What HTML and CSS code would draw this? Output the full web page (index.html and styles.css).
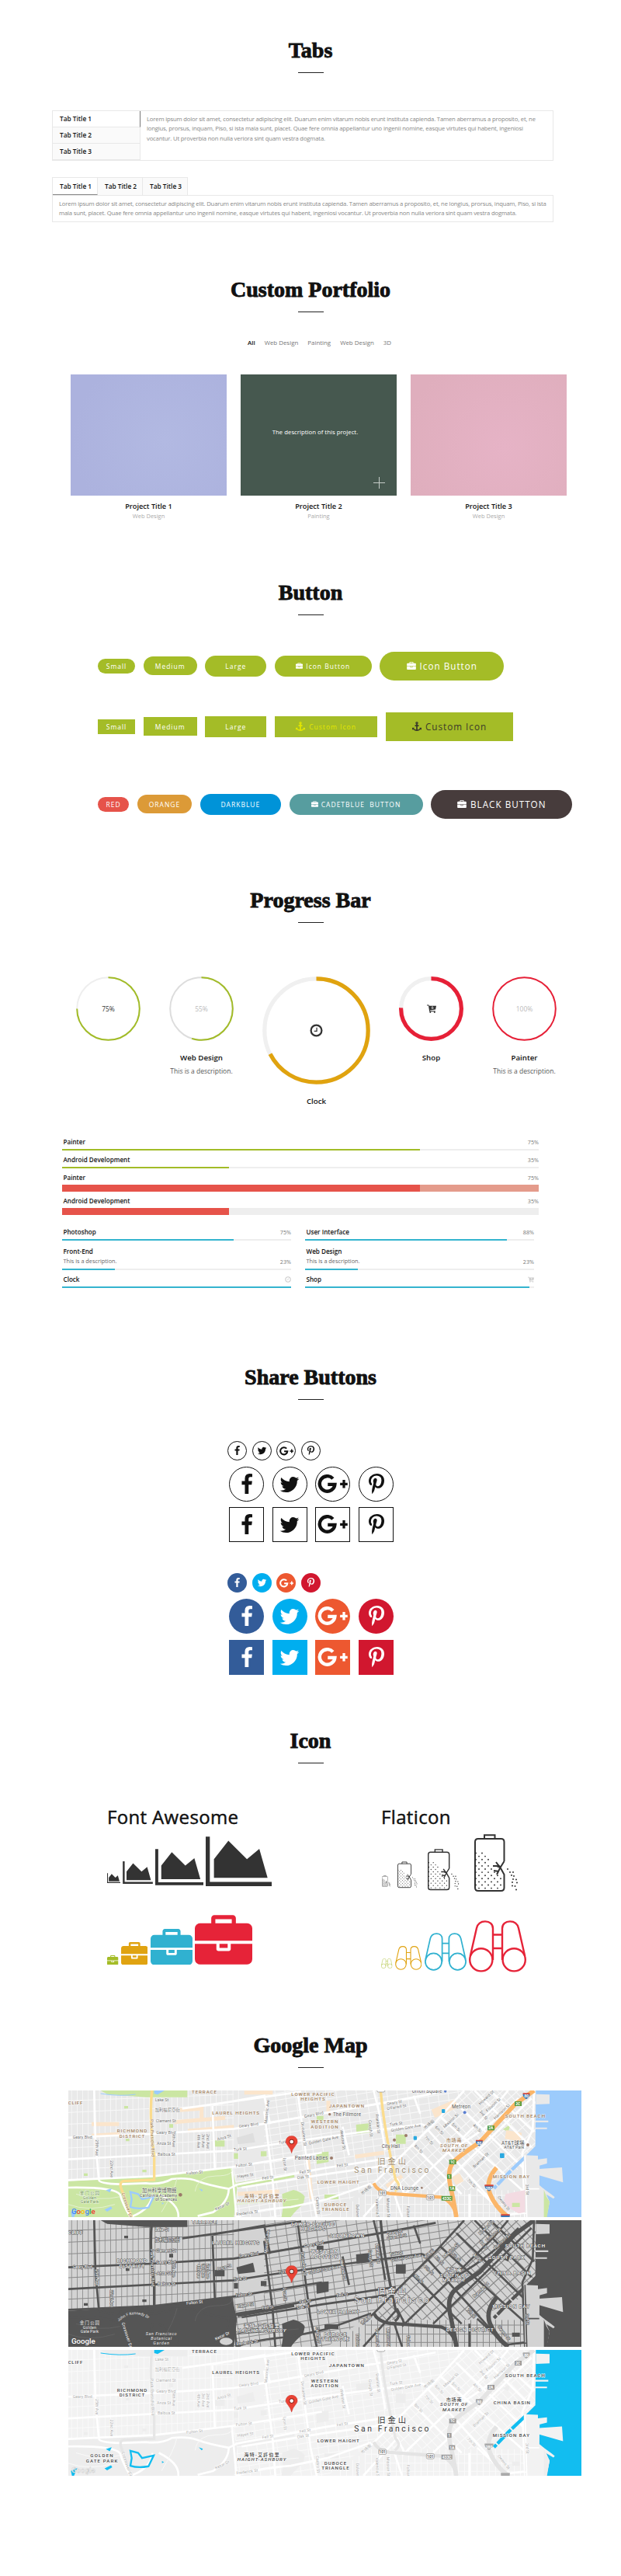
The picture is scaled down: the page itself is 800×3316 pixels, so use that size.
FILE: index.html
```html
<!DOCTYPE html>
<html lang="en">
<head>
<meta charset="utf-8">
<title>Elements</title>
<link rel="stylesheet" href="styles.css">
</head>
<body>
<svg class="defs" aria-hidden="true">
  <symbol id="facebook" viewBox="0 0 1792 1792"><path d="M1343 12v264h-157q-86 0-116 36t-30 108v189h293l-39 296h-254v759h-306v-759h-255v-296h255v-218q0-186 104-288.5t277-102.5q147 0 228 12z"/></symbol>
  <symbol id="twitter" viewBox="0 0 1792 1792"><path d="M1684 408q-67 98-162 167 1 14 1 42 0 130-38 259.5t-115.5 248.5-184.5 210.5-258 146-323 54.5q-271 0-496-145 35 4 78 4 225 0 401-138-105-2-188-64.5t-114-159.5q33 5 61 5 43 0 85-11-112-23-185.5-111.5t-73.5-205.5v-4q68 38 146 41-66-44-105-115t-39-154q0-88 44-163 121 149 294.5 238.5t371.5 99.5q-8-38-8-74 0-134 94.5-228.5t228.5-94.5q140 0 236 102 109-21 205-78-37 115-142 178 93-10 186-50z"/></symbol>
  <symbol id="gplus" viewBox="0 0 40 26"><path fill="none" stroke="currentColor" stroke-width="4.6" d="M20.4 5.6A10.2 10.2 0 1 0 23 13.4H13.5"/><path d="M30 11.2h3.4V7.4h3.4v3.8h3.2v3.4h-3.2v3.6h-3.4v-3.6H30z"/></symbol>
  <symbol id="pinterest" viewBox="0 0 1792 1792"><path d="M256 597q0-108 37.5-203.5t103.5-166.5 152-123 185-78 202-26q158 0 294 66.5t221 193.5 85 287q0 96-19 188t-60 177-100 149.5-145 103-189 38.5q-68 0-135-32t-96-88q-10 39-28 112.5t-23.5 95-20.5 71-26 71-32 62.5-46 77.5-62 86.5l-14 5-9-10q-15-157-15-188 0-92 21.5-206.5t66.5-287.5 52-203q-32-65-32-169 0-83 52-156t132-73q61 0 95 40.5t34 102.5q0 66-44 191t-44 187q0 63 45 104.5t109 41.5q55 0 102-25t78.5-68 56-95 38-110.5 20-111 6.5-99.5q0-173-109.5-269.5t-285.5-96.5q-200 0-334 129.5t-134 328.5q0 44 12.5 85t27 65 27 45.5 12.5 30.5q0 28-15 73t-37 45q-2 0-17-3-51-15-90.5-56t-61-94.5-32.5-108-11-106.5z"/></symbol>
  <symbol id="briefcase" viewBox="0 0 1792 1536"><path d="M640 256h512v-128h-512v128zm1152 640v480q0 66-47 113t-113 47h-1472q-66 0-113-47t-47-113v-480h672v160q0 26 19 45t45 19h320q26 0 45-19t19-45v-160h672zm-768 0v128h-256v-128h256zm768-480v384h-1792v-384q0-66 47-113t113-47h352v-160q0-40 28-68t68-28h576q40 0 68 28t28 68v160h352q66 0 113 47t47 113z"/></symbol>
  <symbol id="area" viewBox="0 128 2048 1536"><path d="M2048 1536v128h-2048v-1536h128v1408h1920zm-384-1024l256 896h-1664v-576l448-576 576 576z"/></symbol>
  <symbol id="anchor" viewBox="0 0 1792 1792"><path d="M960 256q0-26-19-45t-45-19-45 19-19 45 19 45 45 19 45-19 19-45zm832 928v352q0 22-20 30-8 2-12 2-12 0-23-9l-93-93q-119 143-318.5 226.5t-429.5 83.5-429.5-83.5-318.5-226.5l-93 93q-9 9-23 9-4 0-12-2-20-8-20-30v-352q0-14 9-23t23-9h352q22 0 30 20 8 19-7 35l-100 100q67 91 189.5 153.5t271.5 82.5v-647h-192q-26 0-45-19t-19-45v-128q0-26 19-45t45-19h192v-163q-58-34-93-92.5t-35-128.5q0-106 75-181t181-75 181 75 75 181q0 70-35 128.5t-93 92.5v163h192q26 0 45 19t19 45v128q0 26-19 45t-45 19h-192v647q149-20 271.5-82.5t189.5-153.5l-100-100q-15-16-7-35 8-20 30-20h352q14 0 23 9t9 23z"/></symbol>
  <symbol id="clock" viewBox="0 0 18 18"><circle cx="9" cy="9" r="7.3" fill="none" stroke="currentColor" stroke-width="2.4"/><path d="M9.6 5v5H6" fill="none" stroke="currentColor" stroke-width="1.3"/></symbol>
  <symbol id="cart" viewBox="0 0 12 11"><path d="M0 .5h2.4l.5 1.2H12l-.9 4.8-7.2.9.3.9h6.6v1H3.2L2 1.6H0z"/><circle cx="4.3" cy="10" r="1"/><circle cx="9.8" cy="10" r="1"/><path d="M7 2.2v3M5.6 4l1.5 1.5L8.6 4" fill="none" stroke="#fff" stroke-width=".8"/></symbol>
  <symbol id="binoculars" viewBox="0 0 74 67"><g fill="none" stroke="currentColor" stroke-width="2.4"><circle cx="15.8" cy="50.8" r="14.6"/><circle cx="58.2" cy="50.8" r="14.6"/><path d="M1.8 46 10 10C11.5 4 15 1.4 21 1.4S31 5 31 10.500V51M72.200 46 64 10C62.500 4 59 1.400 53 1.400S43 5 43 10.500V51M31 18.500H43M31 36H43"/></g></symbol>
  <symbol id="battery" viewBox="0 0 57 75"><g fill="none" stroke="currentColor" stroke-width="2"><path d="M38.500 35V10Q38.500 6 34.500 6H5Q1 6 1 10V69Q1 73 5 73H34.500Q38.500 73 38.500 69V52L33.500 43L38.500 35M13 6V1.200H26.500V6M28 36L31 40L34 43M24 41H29L33.500 43L31 48L25 47M31 48L29 52"/><g stroke-linecap="round" stroke-width="1.900" stroke-dasharray="0 8"><path d="M2 24.500H11M6 28.600H15M2 32.700H19M6 36.800H22M2 40.900H19M6 45H23M2 49.100H27M6 53.200H31M2 57.300H35M6 61.400H38M2 65.500H35M6 69.600H38"/></g><path stroke-linecap="round" stroke-width="2" d="M43 45h0M46 49h0M50 49h0M48 53h0M51 54h0M50 58h0M54 58.500h0M49 62h0M55 62.500h0M49 66.500h0M52.500 67h0M54 71.500h0"/></g></symbol>
  <symbol id="pin" viewBox="0 0 48 68"><path fill="#ea4335" stroke="#b5322a" d="M24 67Q21 52 9 38Q1 28 1 23A23 23 0 0 1 47 23Q47 28 39 38Q27 52 24 67z"/><circle cx="24" cy="23" r="10" fill="#8c251c"/><circle cx="24" cy="23" r="7" fill="var(--pin-dot)"/></symbol>

  <symbol id="streets" viewBox="0 0 1983 489">
    <rect width="1983" height="489" fill="var(--land)"/>
    <!-- fine residential grids -->
    <g fill="none" stroke="var(--minor)">
      <g clip-path="url(#west)">
        <path d="M-10 175H660" stroke-width="400" stroke-dasharray="2.500 19"/>
        <path d="M0 40 640 15M0 85 640 55M0 130 640 105M0 222 640 190M0 305 640 275" stroke-width="3"/>
      </g>
      <g clip-path="url(#mid)">
        <path d="M560 300 1700 150" stroke-width="900" stroke-dasharray="3 36"/>
        <path d="M950 -400V900" stroke-width="1500" stroke-dasharray="3 23" transform="rotate(-9 950 250)"/>
      </g>
      <g clip-path="url(#soma)">
        <path d="M900 240H1900" stroke-width="1100" stroke-dasharray="4 35" transform="rotate(48 1400 240)"/>
        <path d="M900 240H1900" stroke-width="1100" stroke-dasharray="3 22" transform="rotate(-43 1400 240)"/>
      </g>
      <g clip-path="url(#south)">
        <path d="M1050 400H1850" stroke-width="220" stroke-dasharray="3 21"/>
        <path d="M1150 405H1800M1150 440H1800M1150 472H1800" stroke-width="3"/>
      </g>
    </g>
    <!-- parks -->
    <g fill="var(--park)">
      <path d="M0 350 330 330 632 296 652 380 640 489H0z"/>
      <path d="M125 0H460V26H300L150 14z"/>
      <path d="M648 357 872 322 874 335 655 374zM826 400 870 384Q900 390 914 410L908 440Q880 460 860 489H824L830 450z"/>
      <path d="M566 193h38v24h-38zM640 242h16v22h-16zM744 235h22v19h-22zM958 240 1006 236V276L960 284zM1112 132 1168 126V162L1114 168zM1266 170h38v36h-38zM990 402h54v18h-54zM390 130h15v14h-15zM216 60h15v10h-15zM60 320h15v10h-15zM222 186h14v10h-14zM960 98h26v18h-26zM286 306h16v10h-16z"/>
      <path d="M1715 434h30v16h-30zM1680 150 1710 130 1700 160z"/>
    </g>
    <path fill="var(--block)" d="M650 182 714 164 722 200 656 208z"/>
    <!-- commercial strips -->
    <g fill="none" stroke="var(--shop)" stroke-width="15">
      <path d="M90 130H196M90 175 200 168M430 76 515 70V110M410 122 606 106M462 156 640 140M680 8H790M655 400 815 390M1108 256 1220 240M926 264 940 420M1005 90V40M1230 370 1290 330"/>
      <path stroke-width="34" d="M1410 90 1500 50M1690 170 1750 180M1490 350 1520 335"/>
    </g>
    <!-- arterials -->
    <g fill="none" stroke="var(--road)" stroke-width="8">
      <path d="M0 182 320 168 640 148Q780 125 1020 82L1260 40 1420 10M0 266 640 232Q800 206 1100 165L1370 130M440 70 900 5M0 346 330 331 632 296 980 240M100 0 105 200 118 345M557 60 566 300M757 80 790 350 800 489M888 20 936 380 960 489M1060 140 1085 250M632 296 650 489M560 55 757 20 780 130M1180 0 1200 80 1225 230M1335 20 1360 90M645 365 990 300 1265 258M670 375 980 325 1230 290"/>
      <path d="M118 345Q120 360 200 362L300 358Q360 365 400 342Q460 335 500 350T620 380L650 365M0 375Q180 372 200 402Q210 440 240 489M620 380Q620 430 560 470L500 485M350 400Q430 440 425 489M240 489Q320 460 325 400M650 489Q720 460 860 450L1000 420 1170 360"/>
      <path d="M1160 380 1430 110 1530 0M1290 410 1640 70 1700 0M1410 400 1790 30M1370 130 1640 430M1330 210 1520 400M1435 100 1760 390M1500 50 1790 330M1570 0 1790 220M1630 0 1800 160M1470 230Q1600 170 1740 30"/>
      <path d="M1800 0 1795 150 1755 240 1765 489M1580 380 1700 489M1265 350 1140 489M1270 340 1300 400M1260 400 1290 489M1700 480 1780 470M1550 489V400"/>
    </g>
    <g fill="none" stroke="var(--minor-park)" stroke-width="3"><path d="M490 390Q500 330 570 330T632 300M420 340Q410 390 360 470M30 400Q120 430 200 410M720 420 650 440 890 420M0 440Q80 470 180 440"/></g>
    <!-- highways -->
    <g fill="none" stroke="var(--hwy)" stroke-width="13">
      <path stroke="var(--hwy2)" stroke-width="10" d="M323 0Q312 120 332 250V345L215 350Q195 352 205 380L245 489M1207 0Q1220 150 1265 345Q1290 370 1262 390"/>
      <path d="M1180 358Q1195 390 1240 398L1440 412Q1490 430 1500 489"/>
      <path stroke-width="17" d="M1500 489Q1490 430 1475 360Q1465 310 1485 280Q1500 260 1590 200L1725 55 1800 0M1655 298Q1610 350 1630 400Q1650 450 1700 489"/>
    </g>
    <!-- bay, piers and channel -->
    <path fill="var(--water)" d="M1807 0H1983V489H1848L1860 430 1838 380 1820 365 1822 270 1770 250 1805 215z"/>
    <path fill="none" stroke="var(--water)" stroke-width="13" stroke-dasharray="74 6" d="M1768 255 1700 320 1645 378"/>
    <path fill="var(--land)" d="M1807 14 1860 16V52L1807 54zM1805 116H1855V123H1805zM1805 143H1850V149H1805zM1760 250 1815 252V266L1850 262V282L1820 290V303L1908 297 1912 355 1820 328V372L1838 380 1868 402 1880 412 1875 418 1838 396 1860 430 1848 489H1765z"/>
    <path fill="var(--park)" d="M1838 384 1848 410 1860 430 1850 489H1838z"/>
    <path fill="none" stroke="var(--road)" stroke-width="5" d="M1765 250 1772 489M1765 380H1820M1700 480 1770 474"/>
  </symbol>

  <symbol id="ponds" viewBox="0 0 1983 489">
    <path fill="var(--water)" d="M332 0H372L345 16 332 12zM145 385 168 378 160 394zM140 460 165 448 170 456 150 468zM504 378 520 384 516 390zM362 432 370 436 362 440zM10 470 35 458 22 489H14z"/>
    <path fill="none" stroke="var(--water)" stroke-width="7" d="M240 392 245 420 240 450Q270 460 310 452L330 410 285 420 270 400z"/>
    <path fill="none" stroke="var(--water)" stroke-width="3" d="M125 12Q200 24 260 15"/>
  </symbol>

  <symbol id="labels" viewBox="0 0 1983 489">
    <g class="area">
      <text x="525" y="12" textLength="96">TERRACE</text>
      <text x="27" y="55" textLength="56">CLIFF</text>
      <text x="647" y="94" textLength="182">LAUREL HEIGHTS</text>
      <text x="246" y="162" textLength="116">RICHMOND</text>
      <text x="246" y="182" textLength="98">DISTRICT</text>
      <text x="945" y="20" textLength="166">LOWER PACIFIC</text>
      <text x="945" y="39" textLength="94">HEIGHTS</text>
      <text x="1075" y="65" textLength="136">JAPANTOWN</text>
      <text x="990" y="127" textLength="104">WESTERN</text>
      <text x="990" y="146" textLength="106">ADDITION</text>
      <text x="1765" y="105" textLength="154">SOUTH BEACH</text>
      <text x="1711" y="338" textLength="142">MISSION BAY</text>
      <text x="1043" y="360" textLength="162">LOWER HAIGHT</text>
      <text x="1032" y="447" textLength="86">DUBOCE</text>
      <text x="1032" y="466" textLength="106">TRIANGLE</text>
      <text x="747" y="415" textLength="136">海特-艾許伯里</text>
      <text x="747" y="433" textLength="188" font-style="italic">HAIGHT-ASHBURY</text>
      <text x="1490" y="198" textLength="60">市场南</text>
      <text x="1490" y="218" textLength="106" font-style="italic">SOUTH OF</text>
      <text x="1490" y="237" textLength="88" font-style="italic">MARKET</text>
    </g>
    <g class="city"><text x="1250" y="285" textLength="110">旧金山</text><text x="1249" y="318" textLength="288">San Francisco</text></g>
    <g class="street">
      <text x="335" y="43">Lake St</text><text x="335" y="81">加利福尼亞街</text><text x="338" y="124">Clement St</text>
      <text x="340" y="167">Geary Blvd</text><text x="17" y="187">Geary Blvd</text><text x="342" y="210">Anza St</text><text x="345" y="251">Balboa St</text>
      <text transform="translate(104 190) rotate(90)">25th Ave</text><text transform="translate(163 270) rotate(90)">22nd Ave</text>
      <text transform="translate(403 166) rotate(90)">9th Ave</text><text transform="translate(497 170) rotate(90)">4th Ave</text><text transform="translate(516 168) rotate(90)">3rd Ave</text><text transform="translate(535 168) rotate(90)">2nd Ave</text>
      <text transform="translate(660 144) rotate(-8)">Geary Blvd</text><text transform="translate(577 194) rotate(-16)">Anza St</text><text transform="translate(640 234) rotate(-5)">Turk St</text>
      <text transform="translate(813 206) rotate(-4)">Turk St</text><text transform="translate(930 209) rotate(-12)">Golden Gate Ave</text><text transform="translate(913 106) rotate(-12)">Geary Blvd</text>
      <text transform="translate(457 326) rotate(-6)">Fulton St</text><text transform="translate(648 296) rotate(-6)">Fulton St</text><text transform="translate(654 338) rotate(-8)">Hayes St</text>
      <text transform="translate(750 345) rotate(-8)">Fell St</text><text transform="translate(894 322) rotate(-8)">Fell St</text><text transform="translate(885 343) rotate(-8)">Oak St</text><text transform="translate(1038 297) rotate(-8)">Fell St</text>
      <text transform="translate(570 464) rotate(-25)">Kezar Dr</text><text transform="translate(650 484) rotate(-8)">Frederick St</text>
      <text transform="translate(768 128) rotate(-84)">Masonic Ave</text><text transform="translate(899 122) rotate(83)">Divisadero St</text><text transform="translate(830 260) rotate(86)">Lyon St</text>
      <text transform="translate(957 412) rotate(86)">Castro St</text><text transform="translate(1050 152) rotate(82)">Webster St</text><text transform="translate(1160 115) rotate(85)">Gough St</text><text transform="translate(1187 92) rotate(84)">Franklin St</text>
      <text transform="translate(1232 57) rotate(-10)">Geary St</text><text transform="translate(1232 76) rotate(-10)">O'Farrell St</text><text transform="translate(1243 137) rotate(-7)">Turk St</text><text transform="translate(1248 160) rotate(-10)">Golden Gate Ave</text>
      <text transform="translate(1455 146) rotate(-43)">Mission St</text><text transform="translate(1592 57) rotate(-43)">Howard St</text><text transform="translate(1620 84) rotate(-43)">Folsom St</text><text transform="translate(1650 113) rotate(-43)">Harrison St</text><text transform="translate(1570 300) rotate(-44)">Brannan St</text>
      <text transform="translate(1335 215) rotate(45)">8th St</text><text transform="translate(1375 182) rotate(45)">7th St</text><text transform="translate(1415 143) rotate(45)">6th St</text><text transform="translate(1480 132) rotate(45)">5th St</text><text transform="translate(1562 135) rotate(45)">4th St</text><text transform="translate(1588 82) rotate(52)">3rd St</text><text transform="translate(1540 348) rotate(45)">7th St</text>
      <text transform="translate(1768 362) rotate(88)">3rd St</text><text transform="translate(1658 412) rotate(52)">Owens St</text><text transform="translate(1380 152) rotate(-42)">市场街</text><text transform="translate(1137 405) rotate(-42)">市场街</text>
      <text transform="translate(1112 440) rotate(88)">Dolores St</text><text transform="translate(1188 418) rotate(88)">Valencia St</text><text transform="translate(1230 416) rotate(88)">Mission St</text><text transform="translate(1308 446) rotate(88)">Folsom St</text>
      <text class="hwy-name" transform="translate(317 112) rotate(88)" textLength="144">Park Presidio Blvd</text><text class="hwy-name" transform="translate(206 397) rotate(72)" textLength="100">Crossover Dr</text>
    </g>
  </symbol>

  <symbol id="shields" viewBox="0 0 1983 489">
    <g class="shield">
      <g fill="var(--exit)"><path d="M1725 42h27v18h-27zM1620 136h27v18h-27zM1472 267h27v18h-27zM1464 323h17v18h-17zM1471 370h24v18h-24zM1442 407h42v18h-42z"/></g>
      <g fill="#fff"><text x="1738" y="57">2C</text><text x="1633" y="151">2A</text><text x="1485" y="282">1C</text><text x="1472" y="338">1</text><text x="1483" y="385">1A</text><text x="1463" y="422">433C</text></g>
      <g fill="var(--inter)"><path id="i80" d="M1757 12h26q3 12-13 22-16-10-13-22z"/><use href="#i80" x="-182" y="181"/><path d="M1610 367h32q3 12-16 22-19-10-16-22zM1672 480h34v9h-34z"/></g>
      <g fill="var(--inter-top)"><path d="M1757 10h26v5h-26zM1575 191h26v5h-26zM1609 364h34v6h-34zM1672 478h34v5h-34z"/></g>
      <g fill="#fff"><text x="1770" y="28">80</text><text x="1588" y="209">80</text><text x="1626" y="384">280</text></g>
      <g fill="#fff" stroke="#888" stroke-width="2"><rect x="1199" y="386" width="30" height="20" rx="5"/><rect x="1384" y="403" width="30" height="20" rx="5"/><rect x="1193" y="-12" width="30" height="18" rx="5"/></g>
      <g fill="#666"><text x="1214" y="402">101</text><text x="1399" y="419">101</text></g>
    </g>
  </symbol>
  <clipPath id="west"><path d="M0 0H757V290L330 330 0 346z"/></clipPath>
  <clipPath id="mid"><path d="M757 0H1530L1330 230 1170 360 1000 489H640V290H757z"/></clipPath>
  <clipPath id="soma"><path d="M1530 0H1810V240L1750 300 1560 385H1170L1330 210z"/></clipPath>
  <clipPath id="south"><path d="M1000 489 1170 385H1830V489z"/></clipPath>
</svg>

<section class="block tabs-block">
  <header class="head"><h2>Tabs</h2></header>
  <div class="vtabs">
    <ul class="vtabs-nav"><li class="on">Tab Title 1</li><li>Tab Title 2</li><li>Tab Title 3</li></ul>
    <p class="lorem">Lorem ipsum dolor sit amet, consectetur adipiscing elit. Duarum enim vitarum nobis erunt instituta capienda. Tamen aberramus a proposito, et, ne<br>longius, prorsus, inquam, Piso, si ista mala sunt, placet. Quae fere omnia appellantur uno ingenii nomine, easque virtutes qui habent, ingeniosi<br>vocantur. Ut proverbia non nulla veriora sint quam vestra dogmata.</p>
  </div>
  <ul class="htabs-nav"><li class="on">Tab Title 1</li><li>Tab Title 2</li><li>Tab Title 3</li></ul>
  <div class="htabs-body"><p class="lorem">Lorem ipsum dolor sit amet, consectetur adipiscing elit. Duarum enim vitarum nobis erunt instituta capienda. Tamen aberramus a proposito, et, ne longius, prorsus, inquam, Piso, si ista<br>mala sunt, placet. Quae fere omnia appellantur uno ingenii nomine, easque virtutes qui habent, ingeniosi vocantur. Ut proverbia non nulla veriora sint quam vestra dogmata.</p></div>
</section>

<section class="block portfolio-block">
  <header class="head"><h2>Custom Portfolio</h2></header>
  <nav class="filter"><a class="on">All</a><a>Web Design</a><a>Painting</a><a>Web Design</a><a>3D</a></nav>
  <div class="cards">
    <article><div class="thumb lilac"></div><h3>Project Title 1</h3><small>Web Design</small></article>
    <article><div class="thumb green"><span>The description of this project.</span><i class="plus"></i></div><h3>Project Title 2</h3><small>Painting</small></article>
    <article><div class="thumb pink"></div><h3>Project Title 3</h3><small>Web Design</small></article>
  </div>
</section>

<section class="block button-block">
  <header class="head"><h2>Button</h2></header>
  <div class="btns round">
    <a class="btn s">Small</a><a class="btn m">Medium</a><a class="btn l">Large</a>
    <a class="btn l icon-l"><svg class="bi"><use href="#briefcase"/></svg>Icon Button</a>
    <a class="btn xl icon-xl"><svg class="bi"><use href="#briefcase"/></svg>Icon Button</a>
  </div>
  <div class="btns square">
    <a class="btn s">Small</a><a class="btn m">Medium</a><a class="btn l">Large</a>
    <a class="btn l custom-l"><svg class="ai"><use href="#anchor"/></svg>Custom Icon</a>
    <a class="btn xl custom-xl"><svg class="ai"><use href="#anchor"/></svg>Custom Icon</a>
  </div>
  <div class="btns round colors">
    <a class="btn s red">RED</a><a class="btn m orange">ORANGE</a><a class="btn l blue">DARKBLUE</a>
    <a class="btn l cadet"><svg class="bi"><use href="#briefcase"/></svg>CADETBLUE&nbsp; BUTTON</a>
    <a class="btn xl black"><svg class="bi"><use href="#briefcase"/></svg>BLACK BUTTON</a>
  </div>
</section>

<section class="block progress-block">
  <header class="head"><h2>Progress Bar</h2></header>
  <div class="rings">
    <figure>
      <div class="ring"><svg viewBox="0 0 83 83"><circle cx="41.500" cy="41.500" r="40.300" stroke="#eee"/><circle cx="41.500" cy="41.500" r="40.300" pathLength="100" stroke="#a2bc27" stroke-dasharray="75 100"/></svg><span class="dark">75%</span></div>
    </figure>
    <figure>
      <div class="ring"><svg viewBox="0 0 83 83"><circle cx="41.500" cy="41.500" r="40.300" stroke="#ddd"/><circle cx="41.500" cy="41.500" r="40.300" pathLength="100" stroke="#a2bc27" stroke-dasharray="55 100"/></svg><span>55%</span></div>
      <figcaption>Web Design<small>This is a description.</small></figcaption>
    </figure>
    <figure class="big">
      <div class="ring thick"><svg viewBox="0 0 139 139"><circle cx="69.500" cy="69.500" r="66.700" stroke="#f0f0f0"/><circle cx="69.500" cy="69.500" r="66.700" pathLength="100" stroke="#e0a30f" stroke-dasharray="67.500 100"/></svg><span class="dark"><svg class="ring-clock"><use href="#clock"/></svg></span></div>
      <figcaption>Clock</figcaption>
    </figure>
    <figure>
      <div class="ring thick"><svg viewBox="0 0 83 83"><circle cx="41.500" cy="41.500" r="38.900" stroke="#f0f0f0"/><circle cx="41.500" cy="41.500" r="38.900" pathLength="100" stroke="#e62037" stroke-dasharray="75.500 100"/></svg><span class="dark"><svg class="ring-cart"><use href="#cart"/></svg></span></div>
      <figcaption>Shop</figcaption>
    </figure>
    <figure>
      <div class="ring"><svg viewBox="0 0 83 83"><circle cx="41.500" cy="41.500" r="40.300" stroke="#e62037"/></svg><span>100%</span></div>
      <figcaption>Painter<small>This is a description.</small></figcaption>
    </figure>
  </div>
  <div class="bars">
    <div class="bar"><b>Painter</b><em>75%</em><div class="track"><i style="width:75%"></i></div></div>
    <div class="bar"><b>Android Development</b><em>35%</em><div class="track"><i style="width:35%"></i></div></div>
    <div class="bar fat rose"><b>Painter</b><em>75%</em><div class="track"><i style="width:75%"></i></div></div>
    <div class="bar fat"><b>Android Development</b><em>35%</em><div class="track"><i style="width:35%"></i></div></div>
  </div>
  <div class="bars2">
    <div>
      <div class="bar"><b>Photoshop</b><em>75%</em><div class="track"><i style="width:75%"></i></div></div>
      <div class="bar tall"><b>Front-End<small>This is a description.</small></b><em>23%</em><div class="track"><i style="width:23%"></i></div></div>
      <div class="bar"><b>Clock</b><em><svg><use href="#clock"/></svg></em><div class="track"><i style="width:100%"></i></div></div>
    </div>
    <div>
      <div class="bar"><b>User Interface</b><em>88%</em><div class="track"><i style="width:88%"></i></div></div>
      <div class="bar tall"><b>Web Design<small>This is a description.</small></b><em>23%</em><div class="track"><i style="width:23%"></i></div></div>
      <div class="bar"><b>Shop</b><em><svg><use href="#cart"/></svg></em><div class="track"><i style="width:98%"></i></div></div>
    </div>
  </div>
</section>

<section class="block share-block">
  <header class="head"><h2>Share Buttons</h2></header>
  <div class="share outline">
    <div class="share-row small"><a><svg><use href="#facebook"/></svg></a><a><svg><use href="#twitter"/></svg></a><a><svg class="gp"><use href="#gplus"/></svg></a><a><svg><use href="#pinterest"/></svg></a></div>
    <div class="share-row"><a><svg><use href="#facebook"/></svg></a><a><svg><use href="#twitter"/></svg></a><a><svg class="gp"><use href="#gplus"/></svg></a><a><svg><use href="#pinterest"/></svg></a></div>
    <div class="share-row sq"><a><svg><use href="#facebook"/></svg></a><a><svg><use href="#twitter"/></svg></a><a><svg class="gp"><use href="#gplus"/></svg></a><a><svg><use href="#pinterest"/></svg></a></div>
  </div>
  <div class="share brand">
    <div class="share-row small"><a><svg><use href="#facebook"/></svg></a><a><svg><use href="#twitter"/></svg></a><a><svg class="gp"><use href="#gplus"/></svg></a><a><svg><use href="#pinterest"/></svg></a></div>
    <div class="share-row"><a><svg><use href="#facebook"/></svg></a><a><svg><use href="#twitter"/></svg></a><a><svg class="gp"><use href="#gplus"/></svg></a><a><svg><use href="#pinterest"/></svg></a></div>
    <div class="share-row sq"><a><svg><use href="#facebook"/></svg></a><a><svg><use href="#twitter"/></svg></a><a><svg class="gp"><use href="#gplus"/></svg></a><a><svg><use href="#pinterest"/></svg></a></div>
  </div>
</section>

<section class="block icon-block">
  <header class="head"><h2>Icon</h2></header>
  <div class="icon-cols">
    <div class="fa">
      <h4>Font Awesome</h4>
      <div class="icons charts"><svg class="c1"><use href="#area"/></svg><svg class="c2"><use href="#area"/></svg><svg class="c3"><use href="#area"/></svg><svg class="c4"><use href="#area"/></svg></div>
      <div class="icons cases"><svg class="b1"><use href="#briefcase"/></svg><svg class="b2"><use href="#briefcase"/></svg><svg class="b3"><use href="#briefcase"/></svg><svg class="b4"><use href="#briefcase"/></svg></div>
    </div>
    <div class="fl">
      <h4>Flaticon</h4>
      <div class="icons cells"><svg class="p1"><use href="#battery"/></svg><svg class="p2"><use href="#battery"/></svg><svg class="p3"><use href="#battery"/></svg><svg class="p4"><use href="#battery"/></svg></div>
      <div class="icons scopes"><svg class="b1"><use href="#binoculars"/></svg><svg class="b2"><use href="#binoculars"/></svg><svg class="b3"><use href="#binoculars"/></svg><svg class="b4"><use href="#binoculars"/></svg></div>
    </div>
  </div>
</section>

<section class="block map-block">
  <header class="head"><h2>Google Map</h2></header>
  <div class="maps">
    <svg class="map color" viewBox="0 0 1983 489" preserveAspectRatio="none">
      <use href="#streets"/><path fill="#f3dbe2" d="M1690 400 1765 385V470L1740 475 1680 440z"/><path fill="#cbe6a3" d="M1715 434h30v16h-30z"/>
      <use href="#ponds"/><use href="#labels"/><use href="#shields"/>
      <g class="poi">
        <text x="1023" y="98" textLength="108">The Fillmore</text><text x="875" y="267" textLength="128">Painted Ladies</text><text x="1211" y="223" textLength="70">City Hall</text>
        <text x="1328" y="8" textLength="116">Union Square</text><text x="1482" y="68" textLength="72">Metreon</text><text x="1674" y="210" textLength="88">AT&amp;T球場</text><text class="sm" x="1684" y="224" textLength="78">AT&amp;T Park</text><text x="1245" y="383" textLength="108">DNA Lounge</text>
        <text x="285" y="392" textLength="134">加州科學博物館</text><text class="sm" x="276" y="410" textLength="144">California Academy</text><text class="sm" x="336" y="427" textLength="84">of Sciences</text>
      </g>
      <g fill="#9b7b6a"><circle cx="1010" cy="92" r="5"/><circle cx="1017" cy="261" r="6"/><circle cx="1260" cy="191" r="6"/><circle cx="1305" cy="174" r="6"/><circle cx="433" cy="403" r="7"/><circle cx="1776" cy="210" r="6"/><circle cx="1366" cy="376" r="4"/></g>
      <g fill="#2aa9e0"><rect x="1443" y="72" width="13" height="15" rx="3"/><rect x="1334" y="176" width="13" height="15" rx="3"/><rect x="1668" y="242" width="17" height="19" rx="3"/><circle cx="1532" cy="85" r="6" fill="#5b7fd0"/><circle cx="1457" cy="3" r="5" fill="#5b7fd0"/></g>
      <g class="parkname"><text x="82" y="403" textLength="76">金门公园</text><text x="82" y="420" textLength="52">Golden</text><text x="82" y="435" textLength="70">Gate Park</text></g>
      <text class="google" x="12" y="477" textLength="92"><tspan fill="#4285f4">G</tspan><tspan fill="#ea4335">o</tspan><tspan fill="#fbbc05">o</tspan><tspan fill="#4285f4">g</tspan><tspan fill="#34a853">l</tspan><tspan fill="#ea4335">e</tspan></text>
      <use href="#pin" x="839" y="175" width="48" height="68"/>
    </svg>
    <svg class="map dark-map" viewBox="0 0 1983 489" preserveAspectRatio="none">
      <use href="#streets"/><use href="#labels"/>
      <ellipse cx="610" cy="468" rx="25" ry="14" fill="#d3d3d3"/>
      <g class="area"><text x="1693" y="151" textLength="138">SOUTH PARK</text><text x="1714" y="210" textLength="142">CHINA BASIN</text><text x="1552" y="428" textLength="182">DESIGN DISTRICT</text></g>
      <path id="jfk" fill="none" d="M195 392Q240 350 290 370Q312 378 326 400"/><text class="jfk"><textPath href="#jfk">John F Kennedy Dr</textPath></text>
      <g class="parkname"><text x="82" y="403" textLength="76">金门公园</text><text x="82" y="420" textLength="52">Golden</text><text x="82" y="435" textLength="70">Gate Park</text><g font-style="italic"><text x="359" y="443" textLength="120">San Francisco</text><text x="359" y="462" textLength="80">Botanical</text><text x="359" y="481" textLength="62">Garden</text></g></g>
      <text class="google" x="12" y="477" textLength="92" fill="#fff">Google</text>
      <use href="#pin" x="839" y="175" width="48" height="68"/>
    </svg>
    <svg class="map light" viewBox="0 0 1983 489" preserveAspectRatio="none">
      <use href="#streets"/><use href="#ponds"/><use href="#labels"/><use href="#shields"/>
      <g class="area"><text x="1714" y="210" textLength="142">CHINA BASIN</text><text x="129" y="417" textLength="88">GOLDEN</text><text x="129" y="437" textLength="122">GATE PARK</text></g>
      <text class="google" x="12" y="477" textLength="92" fill="#fff" stroke="#bbb">Google</text>
      <use href="#pin" x="839" y="175" width="48" height="68"/>
    </svg>
  </div>
</section>
</body>
</html>
```
FILE: styles.css
```css
* { box-sizing: border-box; }
body { margin: 0; padding-top: 40px; width: 800px; height: 3316px; background: #fff; color: #111; font-family: "Open Sans", "Noto Sans CJK SC", sans-serif; }
.defs { position: absolute; width: 0; height: 0; }
ul, p, h2, h3, h4, figure { margin: 0; padding: 0; }
ul { list-style: none; }
svg { fill: currentColor; flex: none; }

/* section headings */
.head { display: flex; flex-direction: column; align-items: center; height: 54px; }
.head h2 { font: bold 28px/49px "Liberation Serif", serif; -webkit-text-stroke: .9px #111; white-space: nowrap; }
.head::after { content: ""; width: 33px; height: 1px; margin-top: 4px; background: #222; }
.tabs-block { height: 308px; }
.portfolio-block { height: 390px; }
.button-block { height: 396px; }
.progress-block { height: 614px; }
.share-block { height: 468px; }
.icon-block { height: 392px; }
.map-block { height: 660px; }
.block { display: flow-root; }

/* tabs */
.vtabs { display: flex; width: 646px; height: 65px; margin: 48px 0 0 67px; border: 1px solid #e8e8e8; }
.vtabs-nav { width: 113px; border-right: 1px solid #e8e8e8; display: grid; grid-template-rows: repeat(3, 21px); }
.vtabs-nav li, .htabs-nav li { padding-left: 9px; font-size: 8.300px; font-weight: 600; line-height: 20px; background: #fafafa; border-bottom: 1px solid #e8e8e8; }
.vtabs-nav li.on { background: #fff; margin-right: -1px; border-right: 1px solid #777; }
.lorem { font-size: 7.700px; line-height: 12.300px; letter-spacing: -.175px; color: #888; white-space: nowrap; }
.vtabs .lorem { padding: 4px 0 0 8px; }
.htabs-nav { display: flex; margin: 21px 0 0 67px; width: 175px; border: 1px solid #e8e8e8; border-bottom: 0; }
.htabs-nav li { flex: 1; height: 22px; border-right: 1px solid #e8e8e8; border-bottom: 0; line-height: 21px; }
.htabs-nav li:last-child { border-right: 0; }
.htabs-nav li.on { background: #fff; border-bottom: 1px solid #888; }
.htabs-body { width: 646px; height: 35px; margin-left: 67px; border: 1px solid #e8e8e8; padding: 4px 0 0 8px; }

/* portfolio */
.filter { display: flex; margin: 33px 0 0 319px; height: 12px; gap: 12px; font-size: 7.900px; line-height: 12px; color: #777; white-space: nowrap; }
.filter .on { color: #111; font-weight: 600; }
.cards { display: flex; gap: 18px; margin: 35px 0 0 91px; }
.cards article { width: 201px; text-align: center; }
.thumb { height: 156px; display: grid; place-items: center; position: relative; color: #fff; font-size: 7.800px; }
.thumb span { padding: 0 9px 8px 0; }
.lilac { background: radial-gradient(circle at 60% 55%, #b2b9e2, #acb2de 80%); }
.green { background: #46584f; }
.pink { background: radial-gradient(circle at 60% 60%, #e6b3c6, #dfaebd 85%); }
.plus { position: absolute; right: 15px; bottom: 9px; width: 15px; height: 15px; background: linear-gradient(#c5ccc8, #c5ccc8) 50% 50% / 1px 100% no-repeat, linear-gradient(#c5ccc8, #c5ccc8) 50% 50% / 100% 1px no-repeat; }
.cards h3 { font-size: 9.200px; font-weight: 600; line-height: 14px; margin-top: 7px; }
.cards small { display: block; font-size: 7.500px; line-height: 10px; color: #aaa; }

/* buttons */
.btns { display: flex; align-items: center; gap: 10.700px; height: 38px; margin: 46px 0 0 126px; }
.btns.square { margin-top: 40px; }
.btns.colors { margin-top: 62px; }
.btn { display: flex; align-items: center; justify-content: center; background: #a4bc27; color: #fff; font-size: 8.500px; letter-spacing: 1px; white-space: nowrap; }
.round .btn { border-radius: 20px; }
.s { width: 48px; height: 19px; }
.m { width: 69px; height: 24px; }
.l { width: 79px; height: 27px; }
.xl { height: 37px; font-size: 11.700px; }
.icon-l { width: 124.500px; }
.icon-xl { width: 160px; }
.custom-l { width: 132px; color: #e3e600; }
.custom-xl { width: 164.500px; color: #3a3a2a; }
.bi { width: 9px; height: 8px; margin-right: 4px; }
.ai { width: 12px; height: 12px; margin-right: 5px; }
.xl .bi { width: 12px; height: 10px; margin-right: 5px; }
.red { width: 40px; background: #e6534a; }
.orange { width: 70.500px; background: #dc9a37; }
.blue { width: 104px; background: #0093d8; }
.cadet { width: 172px; background: #579d9f; }
.black { width: 182px; background: #473c3c; }

/* progress rings */
.rings { display: flex; justify-content: space-between; width: 619px; height: 170px; margin: 69px 0 0 98px; }
.rings figure { width: 83px; text-align: center; }
.rings .big { width: 139px; }
.ring { height: 83px; display: grid; place-items: center; }
.ring > * { grid-area: 1 / 1; }
.big .ring { height: 139px; }
.ring > svg { width: 100%; height: 100%; fill: none; stroke-width: 2; transform: rotate(-90deg); }
.ring.thick > svg { stroke-width: 5.200; }
.ring span { font-size: 8.500px; line-height: 12px; color: #bbb; display: grid; }
.ring .dark { color: #333; }
.ring-clock { width: 17px; height: 17px; }
.ring-cart { width: 12px; height: 11px; }
figcaption { margin-top: 15px; font-size: 9.700px; line-height: 13px; font-weight: 600; white-space: nowrap; }
figcaption small { display: block; margin-top: 4px; font-size: 8.500px; font-weight: 400; color: #555; }

/* progress bars */
.bars { width: 614px; margin: 31px 0 0 80px; }
.bar { display: flex; flex-wrap: wrap; justify-content: space-between; align-items: center; align-content: flex-end; height: 23px; font-size: 8.100px; line-height: 12px; white-space: nowrap; }
.bar b { font-weight: 600; padding-left: 1.500px; }
.bar em { font-style: normal; font-size: 7.200px; color: #777; }
.bar .track { width: 100%; height: 2px; margin-top: 3px; background: #eee; }
.bar i { display: block; height: 100%; background: #a2bc27; }
.bars .fat { height: 30px; }
.bars .fat .track { height: 9px; }
.fat i { background: #e6534a; }
.rose .track { background: #e49b8b; }
.bars2 { display: flex; gap: 18px; width: 608px; margin: 10px 0 0 80px; }
.bars2 > div { width: 295px; }
.bars2 i { background: #34b4cf; }
.bars2 .tall { height: 38px; }
.tall b { line-height: 13px; }
.tall small { display: block; font-size: 7.300px; font-weight: 400; color: #666; }
.tall em { align-self: flex-end; }
.bar em svg { display: block; width: 8px; height: 8px; color: #ccc; }

/* share buttons */
.share { margin: 53px 0 0 293px; display: flex; flex-direction: column; gap: 7px; }
.share.brand { margin-top: 40px; }
.share-row { display: flex; gap: 10.700px; padding-left: 2px; }
.share-row.small { gap: 6.700px; padding-left: 0; margin-bottom: 1px; }
.share-row a { width: 45px; height: 45px; border-radius: 50%; display: grid; place-items: center; overflow: hidden; }
.share-row svg { width: 28px; height: 28px; }
.share-row svg.gp { width: 39px; height: 25px; }
.share-row.small a { width: 25px; height: 25px; }
.share-row.small svg { width: 13px; height: 13px; }
.share-row.small svg.gp { width: 18px; height: 12px; }
.share-row.sq a { border-radius: 0; }
.outline a { border: 1px solid #111; }
.brand a { color: #fff; }
.brand .sq { margin-top: 1px; }
.brand a:nth-child(1) { background: #335c99; }
.brand a:nth-child(2) { background: #00aeef; }
.brand a:nth-child(3) { background: #ed5830; }
.brand a:nth-child(4) { background: #d1172f; }

/* icons */
.icon-cols { display: grid; grid-template-columns: 353px 220px; margin: 53px 0 0 138px; }
.icon-cols h4 { font-size: 24px; line-height: 32px; height: 34px; font-weight: 400; letter-spacing: .35px; -webkit-text-stroke: .45px #111; color: #111; white-space: nowrap; }
.icons { display: flex; align-items: flex-end; }
.charts { height: 71px; gap: 3px; color: #333; }
.c1 { width: 17px; height: 13px; margin-bottom: 4px; }
.c2 { width: 39px; height: 29px; margin-bottom: 3px; }
.c3 { width: 62px; height: 47px; margin-bottom: 1px; }
.c4 { width: 85px; height: 64px; }
.cases { height: 101px; gap: 3.400px; }
.b1 { width: 14.500px; height: 12.500px; color: #a4bc27; }
.b2 { width: 34.500px; height: 29.500px; color: #e0a311; }
.b3 { width: 54px; height: 46.500px; color: #30b1d0; }
.b4 { width: 74px; height: 64px; color: #e62338; }
.cells { height: 79px; color: #333; }
.p1 { width: 11px; height: 15px; margin: 0 9px 7px 1px; }
.p2 { width: 26px; height: 35px; margin: 0 13px 5px 0; }
.p3 { width: 41px; height: 54px; margin: 0 19px 2px 0; }
.p4 { width: 57px; height: 75px; }
.scopes { height: 103px; gap: 3.400px; }
.scopes .b1 { height: 13px; margin-bottom: 5px; }
.scopes .b2 { height: 31px; margin-bottom: 3.500px; }
.scopes .b3 { height: 49px; margin-bottom: 2px; }
.scopes .b4 { height: 67px; }

/* maps */
.maps { display: grid; gap: 4px; margin: 29px 0 0 88px; width: 661px; }
.map { display: block; width: 661px; height: 163px; font-family: Roboto, "Noto Sans CJK SC", sans-serif; }
.map:last-child { height: 162px; }
.color { --land: #e9e9e9; --minor: #f8f8f8; --road: #fff; --park: #cbe6a3; --minor-park: #e4f2cf; --block: #dedede; --shop: #fbe5cc; --hwy: #fbb669; --hwy2: #fbdc8e; --water: #9ccbfc; --label: #a07d58; --city: #a08d72; --street: #777; --hwy-label: #8d6a3c; --halo: #ffffffb0; --exit: #549a3c; --inter: #3c78b4; --inter-top: #d0463c; --pin-dot: #fff; }
.dark-map { --land: #d3d3d3; --minor: #8b8b8b; --road: #555; --park: #555; --minor-park: #626262; --block: #555; --shop: transparent; --hwy: #555; --hwy2: #555; --water: #555; --label: #fff; --city: #fff; --street: #fff; --hwy-label: #fff; --halo: #555; --pin-dot: #ddd; }
.light { --land: #f2f2f2; --minor: #fafafa; --road: #fff; --park: #ededed; --minor-park: #f9f9f9; --block: #ededed; --shop: transparent; --hwy: #e4e4e4; --hwy2: #e6e6e6; --water: #12bdf0; --label: #444; --city: #333; --street: #b0b0b0; --hwy-label: #aaa; --halo: #fff; --exit: #999; --inter: #aaa; --inter-top: #aaa; --pin-dot: #fff; }
.area text, .city text, .street text, .poi text, .parkname text { paint-order: stroke; stroke: var(--halo); stroke-width: 3px; }
.area { fill: var(--label); font-size: 18.500px; text-anchor: middle; font-weight: 500; }
.city { fill: var(--city); font-size: 31px; text-anchor: middle; }
.street { fill: var(--street); font-size: 16px; }
.hwy-name { fill: var(--hwy-label); }
.poi { fill: #555; font-size: 19px; }
.poi .sm { font-size: 16.500px; }
.parkname { fill: #6b8f52; font-size: 16.500px; text-anchor: middle; }
.dark-map .parkname, .jfk { fill: #e8e8e8; }
.jfk { font-size: 15px; }
.shield { font-size: 15px; font-weight: 700; text-anchor: middle; }
.google { font-size: 29px; font-weight: 500; }
```
